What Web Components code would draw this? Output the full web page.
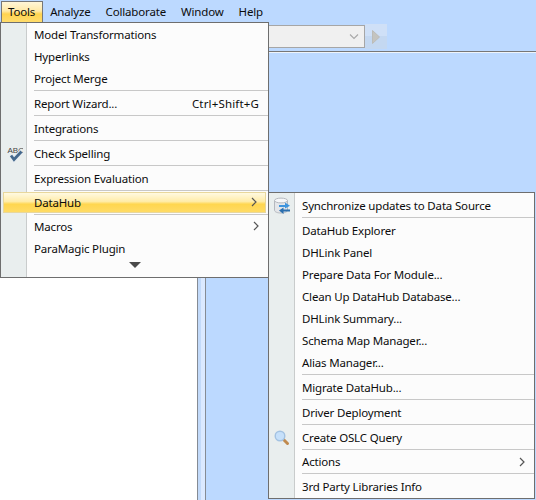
<!DOCTYPE html>
<html>
<head>
<meta charset="utf-8">
<style>
  html, body { margin: 0; height: 100%; overflow: hidden; }
  body { font: 11.5px "Noto Sans", sans-serif; letter-spacing: -0.17px; color: #0c0c0c; }
</style>
</head>
<body>
<app-frame>
  <bar-item active>Tools</bar-item>
  <bar-item>Analyze</bar-item>
  <bar-item>Collaborate</bar-item>
  <bar-item>Window</bar-item>
  <bar-item>Help</bar-item>

  <pop-menu slot="menus" style="left:0;top:22px;width:267px;height:253px;padding-top:1px;">
    <menu-item>Model Transformations</menu-item>
    <menu-item>Hyperlinks</menu-item>
    <menu-item>Project Merge</menu-item>
    <menu-sep></menu-sep>
    <menu-item shortcut="Ctrl+Shift+G">Report Wizard...</menu-item>
    <menu-sep></menu-sep>
    <menu-item>Integrations</menu-item>
    <menu-sep></menu-sep>
    <menu-item>
      <svg slot="icon" width="18" height="18" viewBox="0 0 18 18">
        <text x="2.5" y="7.5" font-family="Liberation Sans" font-size="8" letter-spacing="0" fill="#444">ABC</text>
        <path d="M6 10.5 L9 14.5 L16.5 6.5" fill="none" stroke="#e4eaf0" stroke-width="4.4"/>
        <path d="M6 10.5 L9 14.5 L16.5 6.5" fill="none" stroke="#44688c" stroke-width="2.8"/>
      </svg>
      Check Spelling
    </menu-item>
    <menu-sep></menu-sep>
    <menu-item>Expression Evaluation</menu-item>
    <menu-sep tight></menu-sep>
    <menu-item selected submenu>DataHub</menu-item>
    <menu-sep tight></menu-sep>
    <menu-item submenu>Macros</menu-item>
    <menu-item>ParaMagic Plugin</menu-item>
    <menu-more></menu-more>
  </pop-menu>

  <pop-menu slot="menus" style="left:268px;top:192px;width:265px;padding-top:2px;">
    <menu-item>
      <svg slot="icon" width="18" height="18" viewBox="0 0 18 18">
        <path d="M1.5 3.5 V13 C1.5 15 4.5 16 8 16 C11.5 16 14.5 15 14.5 13 V3.5 Z" fill="#e4e6ea" stroke="#b4b8be"/>
        <ellipse cx="8" cy="3.5" rx="6.5" ry="2.4" fill="#f6f7f9" stroke="#b4b8be"/>
        <path d="M6 8 H12 V5.5 L17 8.8 L12 11.6 V10 H6 Z" fill="#3f95de"/>
        <path d="M17 12.4 H10.5 V10.6 L6 13.6 L10.5 17 V14.6 H17 Z" fill="#2b6fae"/>
      </svg>
      Synchronize updates to Data Source
    </menu-item>
    <menu-sep></menu-sep>
    <menu-item>DataHub Explorer</menu-item>
    <menu-item>DHLink Panel</menu-item>
    <menu-item>Prepare Data For Module...</menu-item>
    <menu-item>Clean Up DataHub Database...</menu-item>
    <menu-item>DHLink Summary...</menu-item>
    <menu-item>Schema Map Manager...</menu-item>
    <menu-item>Alias Manager...</menu-item>
    <menu-sep></menu-sep>
    <menu-item>Migrate DataHub...</menu-item>
    <menu-sep></menu-sep>
    <menu-item>Driver Deployment</menu-item>
    <menu-sep></menu-sep>
    <menu-item>
      <svg slot="icon" width="18" height="18" viewBox="0 0 18 18">
        <path d="M10.5 10.5 L14.5 14.5" stroke="#c08a4e" stroke-width="3" stroke-linecap="round"/>
        <circle cx="7" cy="7" r="4.8" fill="#c6e0fa" stroke="#a3c2e2" stroke-width="1.4"/>
      </svg>
      Create OSLC Query
    </menu-item>
    <menu-sep></menu-sep>
    <menu-item submenu style="height:21px">Actions</menu-item>
    <menu-sep></menu-sep>
    <menu-item>3rd Party Libraries Info</menu-item>
  </pop-menu>
</app-frame>

<script>
class AppFrame extends HTMLElement {
  constructor() {
    super();
    this.attachShadow({mode: 'open'}).innerHTML = `
      <style>
        :host { display: flex; flex-direction: column; position: relative; height: 500px; width: 536px; overflow: hidden; background: #bcd9ff; }
        .bar { display: flex; height: 22px; padding-left: 1px; box-sizing: border-box; }
        .toolbar { height: 31px; box-sizing: border-box; border-bottom: 1px solid #eef4fb; box-shadow: inset 0 -1px #777; display: flex; align-items: flex-start; padding: 2px 0 0 199px; }
        .combo { width: 166px; height: 23px; margin-top: 1px; box-sizing: border-box; background: #f0f0f0; border: 1px solid #a6a6a6; display: flex; align-items: center; justify-content: flex-end; padding-right: 5px; }
        .play { width: 22px; height: 25px; background: linear-gradient(#cfe0f7 50%, #c4d8f1 50%); display: flex; align-items: center; justify-content: flex-start; padding-left: 7px; box-sizing: border-box; }
        .main { flex: 1; display: flex; }
        .white { width: 197px; background: #fff; }
        .strip { width: 9px; box-sizing: border-box; background: linear-gradient(90deg, #c2dafa 50%, #dbe9ff 50%); border-left: 1px solid #858b94; border-right: 1px solid #858b94; }
      </style>
      <div class="bar"><slot></slot></div>
      <div class="toolbar">
        <div class="combo"><svg width="10" height="7" viewBox="0 0 10 7"><path d="M1 1.5 L5 5.5 L9 1.5" fill="none" stroke="#a8a8a8" stroke-width="1.1"/></svg></div>
        <div class="play"><svg width="8" height="14" viewBox="0 0 8 14"><path d="M0.5 0.5 L7.5 7 L0.5 13.5 Z" fill="#c4c4c0" stroke="#bcbcb8"/></svg></div>
      </div>
      <div class="main"><div class="white"></div><div class="strip"></div></div>
      <slot name="menus"></slot>
    `;
  }
}

class BarItem extends HTMLElement {
  constructor() {
    super();
    this.attachShadow({mode: 'open'}).innerHTML = `
      <style>
        :host { display: block; box-sizing: border-box; height: 21px; margin-top: 1px; padding: 0 6.5px 0 6px; margin-right: 0.5px; line-height: 20px; border: 1px solid transparent; border-bottom: 0; }
        :host([active]) { border-color: #777; background: linear-gradient(#fff6d8, #ffe9a6 45%, #ffd34f 60%, #ffdc6c); }
      </style>
      <slot></slot>
    `;
  }
}

class PopMenu extends HTMLElement {
  constructor() {
    super();
    this.attachShadow({mode: 'open'}).innerHTML = `
      <style>
        :host { display: block; position: absolute; border: 1px solid #6e6e6e;
          background: linear-gradient(90deg, #e9eeee 25px, #c9cccc 25px, #c9cccc 26px, #fcfcfc 26px); }
      </style>
      <slot></slot>
    `;
  }
}

class MenuItem extends HTMLElement {
  constructor() {
    super();
    const shortcut = this.getAttribute('shortcut') || '';
    const arrow = this.hasAttribute('submenu')
      ? '<svg width="6" height="10" viewBox="0 0 6 10"><path d="M1 1 L5 5 L1 9" fill="none" stroke="#555" stroke-width="1.2"/></svg>'
      : '';
    this.attachShadow({mode: 'open'}).innerHTML = `
      <style>
        :host { display: flex; position: relative; height: 22px; align-items: center; white-space: nowrap; }
        .icon { width: 26px; flex: none; display: flex; justify-content: center; align-items: center; padding-right: 1px; box-sizing: border-box; }
        .label { flex: 1; padding: 0 0 2px 7px; }
        .right { padding: 0 9px 2px 0; display: flex; align-items: center; letter-spacing: 0.16px; }
        :host([selected]) { height: 21px; margin: 0 2px 1px; background: linear-gradient(#fffbe8, #ffeca8 45%, #ffd64f 58%, #ffdc68); box-shadow: inset 0 0 0 1px #e8d79c; }
        :host([selected]) .icon { width: 24px; }
        :host([selected]) .label { padding-bottom: 1px; }
        :host([selected]) .right { padding-right: 9px; }
      </style>
      <div class="icon"><slot name="icon"></slot></div>
      <div class="label"><slot></slot></div>
      <div class="right">${shortcut}${arrow}</div>
    `;
  }
}

class MenuSep extends HTMLElement {
  constructor() {
    super();
    this.attachShadow({mode: 'open'}).innerHTML = `
      <style>
        :host { display: block; height: 3px; padding: 0 0 2px 33px; box-sizing: border-box; }
        :host([tight]) { height: 2px; padding-bottom: 1px; }
        div { height: 1px; background: #c8c8c8; }
      </style>
      <div></div>
    `;
  }
}

class MenuMore extends HTMLElement {
  constructor() {
    super();
    this.attachShadow({mode: 'open'}).innerHTML = `
      <style>
        :host { display: flex; justify-content: center; align-items: center; height: 10px; padding-left: 1px; }
      </style>
      <svg width="12" height="6" viewBox="0 0 12 6"><path d="M0 0 H12 L6 6 Z" fill="#4a4a4a"/></svg>
    `;
  }
}

customElements.define('app-frame', AppFrame);
customElements.define('bar-item', BarItem);
customElements.define('pop-menu', PopMenu);
customElements.define('menu-item', MenuItem);
customElements.define('menu-sep', MenuSep);
customElements.define('menu-more', MenuMore);
</script>
</body>
</html>
